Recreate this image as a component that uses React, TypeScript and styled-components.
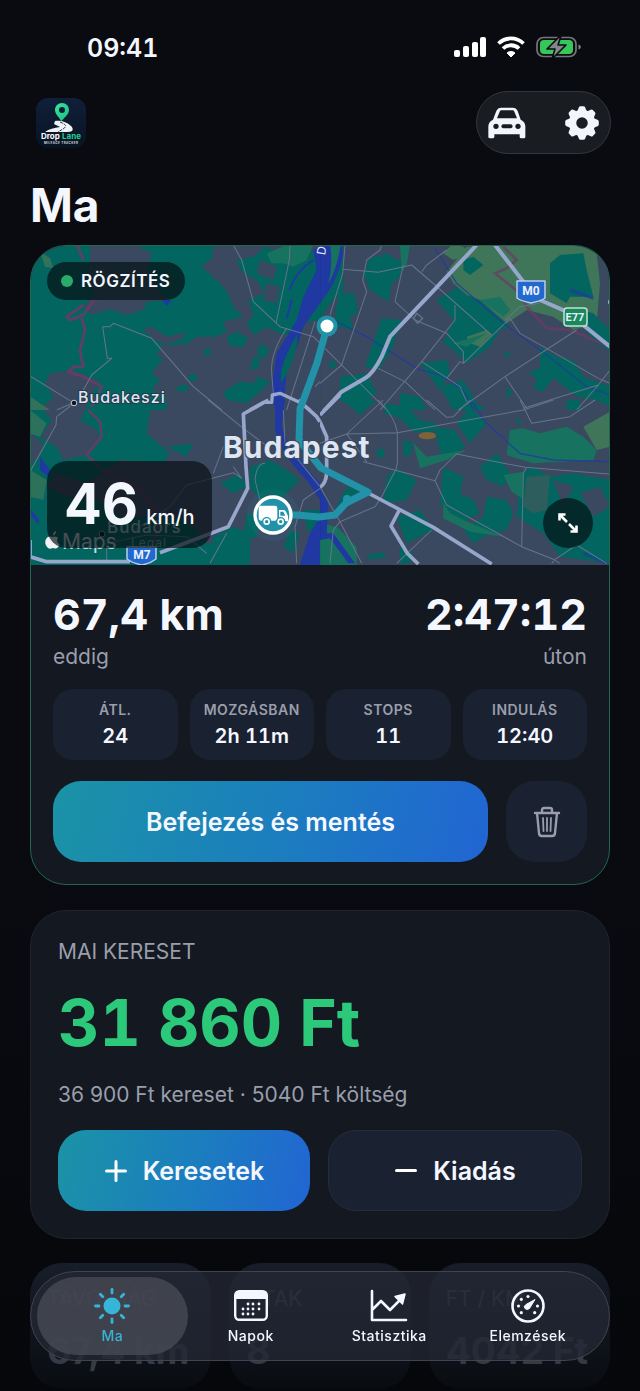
import React from "react";
import styled, { createGlobalStyle, css } from "styled-components";

const color = {
  page: "#090b10",
  card: "#131821",
  tile: "#1a2130",
  text: "#f5f7ff",
  muted: "#9a9eab",
  green: "#2cc97b",
  cyan: "#37b5d8",
  route: "#2192a8",
};

const land = { park: "#03655f", town: "#3b4960", field: "#3f7659", meadow: "#17735f", water: "#2038a2", motorway: "#98a6cc", road: "#66748b", border: "#6f3a66" };

const GlobalStyle = createGlobalStyle`
  *, *::before, *::after { box-sizing: border-box; }
  body {
    margin: 0;
    background: ${color.page};
    color: ${color.text};
    font-family: Inter, "Liberation Sans", sans-serif;
    -webkit-font-smoothing: antialiased;
  }
  button { font: inherit; color: inherit; border: 0; background: none; padding: 0; cursor: pointer; }
  h1, h2, p, dl, dt, dd { margin: 0; }
`;

const Screen = styled.div`
  min-height: 100vh;
  display: flex;
  flex-direction: column;
  background: linear-gradient(180deg, ${color.page} 0%, ${color.page} 60%, #05070b 100%);
`;

const StatusBar = styled.div`
  display: flex;
  justify-content: space-between;
  align-items: center;
  height: 91px;
  padding: 4px 59px 0 87px;
`;

const Clock = styled.time`
  font-size: 25px;
  line-height: 32px;
  font-weight: 600;
  font-variant-numeric: tabular-nums;
`;

const Header = styled.header`
  display: flex;
  justify-content: space-between;
  align-items: center;
  padding: 0 29px 0 36px;
`;

const Toolbar = styled.div`
  display: flex;
  justify-content: space-between;
  align-items: center;
  width: 135px;
  height: 63px;
  padding: 0 10px;
  border: 1px solid #33373d;
  border-radius: 32px;
  background: #191d22;
`;

const IconButton = styled.button`
  display: grid;
  place-items: center;
  height: 44px;
`;

const Main = styled.main`
  display: flex;
  flex-direction: column;
  padding: 0 30px 2px;
`;

const Title = styled.h1`
  margin: 22px 0 11px;
  font-size: 46px;
  line-height: 58px;
  font-weight: 700;
`;

const Card = styled.section<{ $active?: boolean }>`
  display: flex;
  flex-direction: column;
  overflow: hidden;
  border: 1px solid ${(p) => (p.$active ? "#23664f" : "#1f242d")};
  border-radius: 36px;
  background: ${color.card};
`;

const MapFrame = styled.div`
  position: relative;
  height: 319px;
  background: ${land.town};
`;

const MapDrawing = styled.svg`
  display: block;
  width: 100%;
  height: 100%;
`;

const RecordingBadge = styled.div`
  position: absolute;
  top: 16px;
  left: 16px;
  display: flex;
  align-items: center;
  gap: 8px;
  height: 38px;
  padding: 0 15px 0 14px;
  border-radius: 19px;
  background: rgba(7, 20, 25, 0.74);
  font-size: 17px;
  font-weight: 600;
  letter-spacing: 0.5px;
`;

const Dot = styled.span`
  width: 12px;
  height: 12px;
  border-radius: 50%;
  background: #29ac69;
`;

const SpeedBox = styled.div`
  position: absolute;
  left: 16px;
  bottom: 17px;
  display: flex;
  align-items: baseline;
  gap: 8px;
  height: 87px;
  padding: 8px 17px;
  border-radius: 20px;
  background: rgba(6, 14, 18, 0.68);
`;

const SpeedValue = styled.span`
  font-size: 56px;
  line-height: 70px;
  font-weight: 700;
`;

const SpeedUnit = styled.span`
  font-size: 20px;
  font-weight: 500;
`;

const ExpandButton = styled.button`
  position: absolute;
  right: 16px;
  bottom: 17px;
  display: grid;
  place-items: center;
  width: 50px;
  height: 50px;
  border-radius: 50%;
  background: rgba(5, 28, 30, 0.82);
`;

const TripBody = styled.div`
  display: flex;
  flex-direction: column;
  padding: 22px;
`;

const Totals = styled.div`
  display: flex;
  justify-content: space-between;
`;

const Total = styled.div<{ $end?: boolean }>`
  text-align: ${(p) => (p.$end ? "right" : "left")};
`;

const TotalValue = styled.p`
  font-size: 43px;
  line-height: 54px;
  font-weight: 700;
  font-variant-numeric: tabular-nums;
`;

const Caption = styled.p`
  margin-top: 2px;
  color: ${color.muted};
  font-size: 21px;
  line-height: 28px;
`;

const Tiles = styled.dl`
  display: grid;
  grid-template-columns: repeat(4, 1fr);
  gap: 12px;
  margin-top: 18px;
`;

const Tile = styled.div`
  display: flex;
  flex-direction: column;
  align-items: center;
  height: 71px;
  padding-top: 12px;
  border-radius: 20px;
  background: ${color.tile};
`;

const TileLabel = styled.dt`
  color: ${color.muted};
  font-size: 14px;
  line-height: 18px;
  font-weight: 600;
  letter-spacing: 0.5px;
`;

const TileValue = styled.dd`
  font-size: 20px;
  line-height: 34px;
  font-weight: 600;
  font-variant-numeric: tabular-nums;
`;

const Actions = styled.div`
  display: flex;
  gap: 18px;
  margin-top: 21px;
`;

const ActionButton = styled.button<{ $kind: "primary" | "plain" | "icon" }>`
  display: flex;
  align-items: center;
  justify-content: center;
  gap: 15px;
  height: 81px;
  border-radius: 28px;
  font-size: 25px;
  font-weight: 600;
  ${(p) => (p.$kind === "icon" ? css`flex: 0 0 81px;` : css`flex: 1 1 0;`)}
  ${(p) =>
    p.$kind === "primary"
      ? css`background: linear-gradient(105deg, #1b93a6 0%, #1b7fbd 50%, #2165d3 100%);`
      : css`background: ${color.tile};`}
  ${(p) => p.$kind === "plain" && css`border: 1px solid #262d3a;`}
`;

const EarningsCard = styled(Card)`
  margin-top: 25px;
  padding: 25px 27px 27px;
`;

const CardHeading = styled.h2`
  color: ${color.muted};
  font-size: 21px;
  line-height: 32px;
  font-weight: 400;
`;

const Amount = styled.p`
  margin: 15px 0 16px;
  color: ${color.green};
  font-size: 64px;
  line-height: 80px;
  font-weight: 700;
  font-variant-numeric: tabular-nums;
`;

const SummaryRow = styled.div`
  display: grid;
  grid-template-columns: repeat(3, 1fr);
  gap: 18px;
  margin-top: 24px;
`;

const SummaryCard = styled.div`
  height: 126px;
  padding: 22px 17px 0;
  border-radius: 32px;
  background: linear-gradient(180deg, #171e2a 0%, #0d1117 75%, #090b10 100%);
  color: #434751;
  white-space: nowrap;
  overflow: hidden;
`;

const SummaryLabel = styled.p`
  font-size: 21px;
  line-height: 28px;
`;

const SummaryValue = styled.p`
  margin-top: 16px;
  color: #363a43;
  font-size: 37px;
  line-height: 44px;
  font-weight: 700;
`;

const TabBar = styled.nav`
  position: fixed;
  left: 30px;
  right: 30px;
  bottom: 30px;
  display: grid;
  grid-template-columns: repeat(4, 1fr);
  height: 90px;
  padding: 5px 12px;
  border: 1px solid #41444f;
  border-radius: 45px;
  background: rgba(36, 40, 52, 0.78);
`;

const Tab = styled.button<{ $active?: boolean }>`
  display: flex;
  flex-direction: column;
  align-items: center;
  gap: 2px;
  padding-top: 10px;
  border-radius: 40px;
  font-size: 14px;
  line-height: 18px;
  font-weight: 500;
  letter-spacing: 0.5px;
  color: ${(p) => (p.$active ? color.cyan : color.text)};
  ${(p) =>
    p.$active &&
    css`
      margin: 0 -6px;
      background: rgba(76, 79, 89, 0.72);
    `}
`;

const StatusIcons = () => (
  <svg width="127" height="24" viewBox="0 1 127 24" role="img" aria-label="Jel, Wi-Fi, töltés">
    <g fill="#fff">
      <rect x="0" y="15" width="6" height="7" rx="2" />
      <rect x="9" y="11" width="6" height="11" rx="2" />
      <rect x="18" y="7" width="6" height="15" rx="2" />
      <rect x="26" y="2" width="6" height="20" rx="2" />
      <path d="M57 22l-4-4c2-2 6-2 8 0z" stroke="#fff" strokeLinejoin="round" />
    </g>
    <g fill="none" stroke="#fff" strokeWidth="3.8">
      <path d="M44.500 8.500a18 18 0 0 1 25 0" />
      <path d="M49 13.500a11.500 11.500 0 0 1 16 0" />
    </g>
    <rect x="83" y="2.500" width="39" height="19" rx="6.500" fill="none" stroke="#74777a" strokeWidth="1.700" />
    <path d="M124.500 9.500c3 1 3 4 0 5z" fill="#84878a" />
    <rect x="86" y="5" width="33" height="14" rx="4" fill="#35c759" />
    <path d="M106 1L93 14h8l-3 10 14-14h-8l3-9z" fill="#84878a" stroke={color.page} strokeWidth="1.600" strokeLinejoin="round" />
  </svg>
);

const Logo = () => (
  <svg width="50" height="50" viewBox="0 0 50 50" role="img" aria-label="Drop Lane">
    <defs>
      <linearGradient id="logoBg" x1="0" y1="0" x2="0" y2="1">
        <stop offset="0" stopColor="#10203a" />
        <stop offset="1" stopColor="#081222" />
      </linearGradient>
      <linearGradient id="pin" x1="0" y1="0" x2="1" y2="1">
        <stop offset="0" stopColor="#3be59a" />
        <stop offset="1" stopColor="#12bf87" />
      </linearGradient>
    </defs>
    <rect width="50" height="50" rx="12" fill="url(#logoBg)" />
    <path d="M19 23c6-1 12 1 16 5 3 3 2 6-3 6H9c4-3 9-4 15-5l-6-3z" fill="#eef2f5" />
    <path d="M24 24c5 2 8 4 3 7l-5 3" fill="none" stroke="#26344a" strokeWidth="1" strokeDasharray="3 1" />
    <path fillRule="evenodd" d="M26 5c-4 0-7 3-7 7 0 5 6 8 6 12 2-4 8-7 8-12 0-4-3-7-7-7zm0 4a3 3 0 1 1 0 6 3 3 0 0 1 0-6z" fill="url(#pin)" />
    <text x="5" y="41" fontSize="8" fontWeight="700" fill="#fff">Drop</text>
    <text x="26" y="41" fontSize="8" fontWeight="700" fill="#20cf93">Lane</text>
    <text x="8" y="46" fontSize="3" fontWeight="700" letterSpacing=".4" fill="#cdd5de">MILEAGE TRACKER</text>
  </svg>
);

const CarIcon = () => (
  <svg width="40" height="32" viewBox="0 0 120 96" aria-hidden="true">
    <path
      fillRule="evenodd"
      fill="#f2f5fb"
      d="M28 12Q32 2 43 2h34q11 0 15 10l9 26q14 7 14 20v32q0 4-4 4h-8q-5 0-5-4v-8H22v8q0 4-5 4H9q-5 0-5-4V58q0-13 14-20zM38 14q1-4 6-4h32q5 0 6 4l8 20H30zM27 50a8 8 0 1 0 0 16 8 8 0 0 0 0-16zM93 50a8 8 0 1 0 0 16 8 8 0 0 0 0-16zM48 52h24q5 1 5 6t-5 6H48q-5-1-5-6t5-6z"
    />
  </svg>
);

const GearIcon = () => (
  <svg width="36" height="36" viewBox="-18 -18 36 36" aria-hidden="true">
    <circle r="9.500" fill="none" stroke="#f2f5fb" strokeWidth="7.500" />
    {[0, 45, 90, 135, 180, 225, 270, 315].map((a) => (
      <path key={a} transform={`rotate(${a})`} d="M-5-11L-3.200-15.500Q-2.800-16.800-1.500-16.800H1.500Q2.800-16.800 3.200-15.500L5-11z" fill="#f2f5fb" />
    ))}
  </svg>
);

const TrashIcon = () => (
  <svg width="28" height="32" viewBox="0 0 28 32" fill="none" stroke={color.muted} strokeWidth="2.400" strokeLinecap="round" strokeLinejoin="round" aria-hidden="true">
    <path d="M2 7h24M9 7V4q0-2 2-2h6q2 0 2 2v3M4 7l2 20q0 3 3 3h10q3 0 3-3L24 7" />
    <path d="M10 12l.5 13M14 12v13M18 12l-.5 13" strokeWidth="1.800" />
  </svg>
);

const ExpandIcon = () => (
  <svg width="22" height="22" viewBox="0 0 22 22" fill="none" stroke="#fff" strokeWidth="2.600" aria-hidden="true">
    <path d="M8.500 2.500h-6v6M2.500 2.500L10 10M13.500 19.500h6v-6M19.500 19.500L12 12" />
  </svg>
);

const PlusIcon = ({ minus }: { minus?: boolean }) => (
  <svg width="24" height="24" viewBox="0 0 24 24" stroke="#fff" strokeWidth="3" strokeLinecap="round" aria-hidden="true">
    <path d={minus ? "M2.500 11.500h19" : "M2.500 12h19M12 2.500v19"} />
  </svg>
);

const SunIcon = () => (
  <svg width="38" height="38" viewBox="-19 -19 38 38" stroke={color.cyan} strokeWidth="2.800" strokeLinecap="round" aria-hidden="true">
    <circle r="8.500" fill={color.cyan} stroke="none" />
    {[0, 45, 90, 135, 180, 225, 270, 315].map((a) => (
      <path key={a} transform={`rotate(${a})`} d="M0-16.500V-13" />
    ))}
  </svg>
);

const calendarDots = [[15, 14], [20, 14], [26, 14], [10, 19], [15, 19], [20, 19], [26, 19], [10, 24], [15, 24], [20, 24]];

const CalendarIcon = () => (
  <svg width="38" height="38" viewBox="-1 -3 38 38" aria-hidden="true">
    <rect x="2.200" y="1.200" width="31.600" height="28.600" rx="4" fill="none" stroke={color.text} strokeWidth="2.400" />
    <path d="M2 9V5q0-4 4-4h24q4 0 4 4v4z" fill={color.text} />
    {calendarDots.map(([x, y]) => (
      <circle key={`${x}-${y}`} cx={x} cy={y} r="1.400" fill={color.text} />
    ))}
  </svg>
);

const ChartIcon = () => (
  <svg width="38" height="38" viewBox="0 -3 38 38" fill="none" stroke={color.text} strokeWidth="2.600" strokeLinecap="round" strokeLinejoin="round" aria-hidden="true">
    <path d="M2 1v29h34M2 20l9-9 9 9 10-10" />
    <path d="M25 6.500l10-2.500-2.500 10z" fill={color.text} strokeWidth="1.500" />
  </svg>
);

const gaugeDots = [[-9.500, 0], [-6.700, -6.700], [0, -9.500], [9.500, 0], [-6.700, 6.700], [6.700, 6.700]];

const GaugeIcon = () => (
  <svg width="38" height="38" viewBox="-19 -19 38 38" aria-hidden="true">
    <circle r="15.500" fill="none" stroke={color.text} strokeWidth="2.600" />
    {gaugeDots.map(([x, y]) => (
      <circle key={`${x}${y}`} cx={x} cy={y} r="1.600" fill={color.text} />
    ))}
    <path d="M7-6.500L1.500 2.500Q-1 4.500-3 2.500T-2-1.500z" fill={color.text} stroke={color.text} strokeLinejoin="round" />
  </svg>
);

/* The map is drawn as four tiles at three units per pixel. */
const NorthWest = () => (
  <g transform="translate(-10 -5) scale(.33334)">
    <path fill={land.park} d="M0 0H900V510H0z" />
    <path fill={land.town} d="M210 0H320L395 40 385 80 400 130 440 180 380 185 370 210 320 225 270 208 215 225 190 200 225 165 200 120 210 60z" />
    <path fill={land.town} d="M575 25L650 0H900V510H440L440 470 395 450 420 420 395 400 430 355 410 345 430 310 400 300 370 265 395 260 440 290 495 278 490 295 430 318 500 312 530 290 590 290 620 275 610 245 670 230 640 200 625 160 600 130 545 80 580 50z" />
    <path fill={land.park} d="M650 60L700 50 735 20 800 45 870 30 900 60V240L840 250 830 275 790 285 740 262 700 285 680 250 700 225 685 180 735 160 710 120 665 95zM620 290L650 275 685 295 670 320 630 318zM700 350l20 5-5 30-25 5zM550 330l20-5 5 18-20 5z" />
    <path fill={land.town} d="M720 60l50 20-10 40-50-20zM740 130l40 10-10 50-40-10z" />
    <path fill={land.park} d="M505 405l20-5 10 20-25 5zM470 440l30-8 5 20-30 5zM610 455l50-30 40 5 15-20 35 15-30 30-40 35-60-10zM720 310l30 20-20 30-20-20z" />
    <path fill={land.meadow} d="M755 70L740 40 800 15H880L860 60 820 80 790 70z" />
    <path fill={land.town} d="M90 400L160 390 200 410 240 425 215 460 195 510H60L100 470 75 430z" />
    <path fill={land.field} d="M60 35l30 20 10 30-25-5zM30 470l60 40H30z" opacity=".8" />
    <path fill={land.water} d="M880 30L900 20V190L850 260 835 310 800 400 790 510H765L755 440 770 340 830 240 850 170 890 90zM425 180h30l-15 18z" />
    <path fill={land.park} d="M880 75Q820 120 815 190L820 235Q860 160 880 75zM830 285Q840 330 785 430 770 390 830 285z" />
    <g fill="none" stroke={land.border} strokeWidth="9" strokeLinejoin="round" opacity=".8">
      <path d="M165 0L190 60M225 175L190 225 150 240 140 230 190 195M185 235L195 270 180 330 190 380 160 380 145 395 190 410 245 440 215 500" />
    </g>
    <g fill="none" stroke={land.road} strokeWidth="3" strokeLinejoin="round">
      <path d="M30 408L160 488 110 510M190 450L215 405 275 355H262L248 260H270L280 250 395 295 520 440 605 510M640 15L665 60 700 185 780 260 880 290 900 310M810 15L808 60 768 250M800 265Q750 340 755 400L760 460M885 245L800 510M885 440L900 425" />
    </g>
    <path d="M815 180L800 235M808 150Q830 90 880 60" fill="none" stroke={land.water} strokeWidth="6" />
    <path d="M690 510L730 487H755L757 465 780 460 835 485 870 510" fill="none" stroke={land.motorway} strokeWidth="10" strokeLinejoin="round" />
  </g>
);

const NorthEast = () => (
  <g transform="translate(290 -5) scale(.33334)">
    <path fill={land.town} d="M0 0H900V510H0z" />
    <path fill={land.park} d="M150 55L200 40 250 70 240 110 215 130 205 185 150 150 130 100zM60 165l40-10 15 60-25 15 10 40-50-10-5-50zM185 235l60 5-30 90-40 60-40-10 20-60zM60 410l80-10 30 60-60 50-50-30zM0 0H70V160L30 190 0 240zM35 360l15 10-5 15-22-5z" />
    <path fill={land.park} d="M350 180L400 150 430 130 480 180 570 260 540 270 510 320 440 370 400 330 370 310 400 240zM300 370l80-10 10 40-30 50-30-40zM360 440l70-20 40 70 30 20H400zM240 460l60 10 20 40H240zM560 440l20 20-20 15zM625 400l60-30 25 30-40 55-30-10 10-30zM660 320l50 30 50 10 30 50 80 30v60l-40-20-60-10-110-90zM740 480h40v30h-40zM550 340l20-5-5 20z" />
    <path fill={land.field} d="M440 20L750 0 830 40 840 130 830 250 760 270 700 230 620 210 560 250 480 180 440 165 400 130 380 95zM440 290L500 270 515 285 480 320 450 310z" />
    <path fill={land.field} d="M370 40L395 15 430 20 450 40 400 60z" />
    <path fill={land.park} d="M430 60l30-10 30 25-40 30-20-15zM690 70L720 45 790 40 800 90 820 170 750 170 740 190 690 160zM780 210l40 10 50 50v60l-40-20-50-60z" />
    <path fill={land.meadow} d="M240 15h30l-10 60-15 20zM400 310l100-30-60 40zM480 180l60-10 30 40-20 20z" />
    <path d="M0 190Q50 130 68 50V0H0z" fill={land.water} />
    <path d="M30 15h32Q50 90 25 130 40 70 30 15z" fill={land.meadow} />
    <path d="M750 150l70 25" stroke={land.water} strokeWidth="9" opacity=".7" />
    <g fill="none" stroke={land.water} strokeWidth="4" opacity=".75">
      <path d="M345 25Q380 80 410 130L550 250 680 345 800 440 870 465M40 240L140 290 290 385 360 405 430 450 460 510" />
    </g>
    <path d="M550 20L590 60 560 85 525 100 600 160 620 200 680 265 750 270 870 320" fill="none" stroke={land.border} strokeWidth="8" opacity=".7" />
    <g fill="none" stroke={land.road} strokeWidth="3" strokeLinejoin="round">
      <path d="M75 15L68 100 30 225M185 15L180 30 140 60 128 120 140 155 65 375 0 430M68 88L175 97 275 75 345 135 515 285M250 75L225 185 285 240 380 280 430 335 430 370 420 365 380 415M380 30L320 75 305 95M405 195V240L305 365 180 510M305 365L420 440 440 485M15 325L65 375 200 510M175 385L255 425 345 510M430 370L570 235 600 280 680 325 835 415 870 430M415 510L555 410 770 270M555 410L620 505M610 505L835 435 870 390M835 435L770 510M555 240L600 200 660 190" />
    </g>
    <path d="M290 220l18 15-15 15-12-15z" fill="none" stroke={land.road} strokeWidth="4" />
    <g fill="none" stroke={land.motorway} strokeWidth="12" strokeLinejoin="round">
      <path d="M470 15L210 290 185 350Q160 400 135 415L65 455 0 525M525 15L610 125 660 180 740 215 870 320" />
    </g>
    <circle cx="875" cy="186" r="9" fill="#101519" stroke="#c6ccd9" strokeWidth="3" />
  </g>
);

const SouthWest = () => (
  <g transform="translate(-10 155) scale(.33334)">
    <path fill={land.park} d="M0 30H900V510H0z" />
    <path fill={land.town} d="M70 30H195L180 60 230 90 240 120 200 165 130 180 110 140 60 110 95 60zM30 100l40 30-10 40-30 20zM390 30H900V510H660L640 450 560 430 540 400 480 350H300L230 300 140 290 80 260 110 220 200 250 300 180 430 190 450 160 380 100z" />
    <path fill={land.park} d="M600 250l60-30 20 40-40 20zM690 200l60-20 50 30 40 30-60 60-30-20-30 20-30-40zM580 410l60-30 50 20v110H560zM440 140l80-10-20 40zM680 340l40 10-10 60-40 20zM810 390l30 10-20 60-30-20zM850 330h50v70l-40-10zM60 330l40 10 40 80-20 60-90-20V340z" />
    <path fill={land.field} d="M30 30l50 40-20 40-30-10zM30 210l50 30-10 60-40-10z" opacity=".7" />
    <path fill={land.water} d="M765 0H795L785 80Q800 140 900 250V300L860 240Q780 160 765 90zM895 360L870 400 835 510H900V360zM60 170l30 40-5 20-25-20zM30 325l28 35-5 12-23-30z" />
    <path d="M205 30L240 65 245 110 200 165 250 210 350 260 420 340 400 440" fill="none" stroke={land.border} strokeWidth="8" opacity=".8" />
    <g fill="none" stroke={land.road} strokeWidth="3" strokeLinejoin="round">
      <path d="M155 15L110 50 108 75 30 215M565 0L670 85 750 145M345 390L450 320 500 255 640 218 665 235 640 200M610 140L580 220M735 190Q710 190 705 240L720 300M790 30L795 130 900 260M830 490L825 380 850 300 900 265M620 400L570 490M260 490V430L380 405 500 410 560 460" />
    </g>
    <g fill="none" stroke={land.motorway} strokeWidth="11" strokeLinejoin="round">
      <path d="M745 0L670 42 678 200 683 265 625 380 420 458M30 470L80 485H330M30 435V470M835 0L890 50 900 65" />
    </g>
  </g>
);

const SouthEast = () => (
  <g transform="translate(290 155) scale(.33334)">
    <path fill={land.town} d="M0 30H900V510H0z" />
    <path fill={land.park} d="M70 0H170L120 45zM200 10l60 10 40 40 50 10-10 30-60-5-40-40-50-15zM345 80l60 10 30 50-60 40-20-40zM200 230L230 205 290 240 260 300 190 310zM230 350L300 330 340 390 260 430zM370 200l60 30-10 50 40 20 20 40-60 30-60-60zM450 20l50 50-50 60-40-60zM480 200l50-40 40 60-20 40-50-20zM500 290l60 10 20 40-20 50-50 10-50 30-30-40 60-40zM590 350L670 400 720 470 870 490V240L760 220 690 230 640 200 600 220z" />
    <path fill={land.park} d="M240 440l40 20-10 30h-30zM140 465l50-8 10 16-50 5zM80 260l40 10-80 70zM170 150l20-5 5 25-20 5zM250 120l30 10-10 40-20-5zM590 50l15 15-12 12z" />
    <path fill={land.town} d="M700 240l60 20-30 60zM780 280l60-20 30 60-50 30z" />
    <path fill={land.meadow} d="M570 90L610 85 660 100 740 80 790 110 830 150 820 180 640 190 560 165zM550 225l60-10-5 80-30-20zM0 370l50 10 60 60v60H0zM280 130l40 40 120-20-60 30-80 25zM370 310l20 30 40 20 120 50-100-15-80-40z" />
    <path fill={land.field} d="M790 80L870 35V140L830 150z" />
    <path fill="#2d5d5c" d="M620 230L690 225 680 330 640 340 610 320z" />
    <ellipse cx="322" cy="107" rx="26" ry="11" fill="#7d6338" />
    <path fill={land.water} d="M0 270Q20 290 25 320L20 400 40 400 105 490H85L30 415 0 420z" />
    <g fill="none" stroke={land.water} strokeWidth="4" opacity=".8">
      <path d="M455 5L500 70 600 160 700 180 870 185" />
    </g>
    <path d="M790 460L860 490" stroke={land.water} strokeWidth="8" opacity=".6" />
    <g fill="none" stroke={land.road} strokeWidth="3" strokeLinejoin="round">
      <path d="M0 130L80 102 232 98 610 30 700 0M80 102L190 0M175 0Q225 50 232 98V190L228 208 185 290 165 320 60 365 40 390 30 490M130 185L345 242 360 210 410 162 615 202 870 222M345 242L380 315 605 440 700 478 720 490M620 202L610 220 605 440M320 0L380 52 400 50 450 0M600 0L635 70 750 50 825 0M80 102L140 185M0 260L60 365 125 490M335 390L230 490M705 478L770 435 860 490M705 478L695 490" />
    </g>
    <g fill="none" stroke={land.motorway} strokeWidth="11" strokeLinejoin="round">
      <path d="M150 282L340 382 515 492M238 330L213 378 262 460 295 492M0 45L60 -15M0 65L20 110V220Q18 250 0 262" />
    </g>
  </g>
);

const CityMap = () => (
  <MapDrawing viewBox="1 1 578 319" preserveAspectRatio="xMidYMid slice" role="img" aria-label="Budapest térképe">
    <NorthEast />
    <NorthWest />
    <SouthEast />
    <SouthWest />
    <path d="M297 82L287 118 273 156 270 164 269 195 291 223 338 247 316 258 305 270 289 272 267 270 243 270" fill="none" stroke={color.route} strokeWidth="7" strokeLinejoin="round" />
    <circle cx="317" cy="254" r="4" fill={color.route} />
    <circle cx="297" cy="81" r="10.500" fill={color.route} />
    <circle cx="297" cy="81" r="6.500" fill="#fff" />
    <circle cx="243" cy="270" r="26" fill={color.route} opacity=".12" />
    <circle cx="243" cy="270" r="18" fill={color.route} stroke="#fff" strokeWidth="3.400" />
    <g transform="translate(-10 155) scale(.33334)" fill="#fff">
      <rect x="716" y="317" width="56" height="45" rx="7" />
      <path d="M777 330h14q5 0 7 5l6 13v16h-27z" />
      <path d="M781 335h9l6 12h-15z" fill={color.route} />
      <circle cx="740" cy="365" r="12" stroke={color.route} strokeWidth="4" />
      <circle cx="782" cy="365" r="12" stroke={color.route} strokeWidth="4" />
      <circle cx="740" cy="365" r="5" fill={color.route} />
      <circle cx="782" cy="365" r="5" fill={color.route} />
    </g>
    <g fill="#dfe6f3" fontFamily="Inter, sans-serif">
      <text x="193" y="213" fontSize="30" fontWeight="700" letterSpacing="1" stroke="#38465c" strokeWidth="2" paintOrder="stroke">Budapest</text>
      <circle cx="44" cy="158" r="2.800" fill="#10151d" stroke="#c6ccd9" />
      <text x="48" y="158" fontSize="16" fontWeight="500" letterSpacing="1" stroke="#26384c" strokeWidth="2" paintOrder="stroke">Budakeszi</text>
      <circle cx="72" cy="289" r="3" fill="#10151d" stroke="#8a93a5" />
      <text x="77" y="288" fontSize="17" fontWeight="500" letterSpacing="1" opacity=".75">Budaörs</text>
      <text x="101" y="302" fontSize="12" opacity=".5" letterSpacing="1">Legal</text>
      <text x="32" y="304" fontSize="21" opacity=".9">Maps</text>
      <text x="287" y="7" fontSize="12" transform="rotate(-80 293 4)">D</text>
    </g>
    <path d="M26 286q0 3-3 4.500 0-3.500 3-4.500zM28 293q-2-2.500-5-1-5-1.500-7 2-2 4 1 8 2 2.500 4 1.500t4 0q2 .5 3.500-2l1-2q-4-3-1.500-6.500z" fill="#f2f2f4" />
    <path d="M487 36h28v17q-4 3-14 5-10-2-14-5z" fill="#2368cf" stroke="#b9cdf0" strokeWidth="1.500" strokeLinejoin="round" />
    <rect x="534" y="63" width="23" height="18" rx="3" fill="#18885d" stroke="#bfe3d3" strokeWidth="1.500" />
    <path d="M97 302h29v12q-5 4-14 6-10-2-15-6z" fill="#2368cf" stroke="#b9cdf0" strokeWidth="1.500" strokeLinejoin="round" />
    <g fontFamily="Roboto, sans-serif" fontSize="12" fontWeight="700" fill="#eaf1ff" textAnchor="middle">
      <text x="501" y="50">M0</text>
      <text x="545" y="76" fontSize="11">E77</text>
      <text x="112" y="314">M7</text>
    </g>
    <path d="M0 295v16h2v-16z" fill="#7fa6e6" />
  </MapDrawing>
);

const tripStats = [
  ["ÁTL.", "24"],
  ["MOZGÁSBAN", "2h 11m"],
  ["STOPS", "11"],
  ["INDULÁS", "12:40"],
];

const summaries = [
  ["TÁVOLSÁG", "67,4 km"],
  ["UTAK", "8"],
  ["FT / KM", "4042 Ft"],
];

const tabs = [
  { label: "Ma", Icon: SunIcon },
  { label: "Napok", Icon: CalendarIcon },
  { label: "Statisztika", Icon: ChartIcon },
  { label: "Elemzések", Icon: GaugeIcon },
];

export default function App() {
  return (
    <Screen>
      <GlobalStyle />
      <StatusBar>
        <Clock>09:41</Clock>
        <StatusIcons />
      </StatusBar>
      <Header>
        <Logo />
        <Toolbar>
          <IconButton aria-label="Jármű"><CarIcon /></IconButton>
          <IconButton aria-label="Beállítások"><GearIcon /></IconButton>
        </Toolbar>
      </Header>
      <Main>
        <Title>Ma</Title>
        <Card $active>
          <MapFrame>
            <CityMap />
            <RecordingBadge><Dot />RÖGZÍTÉS</RecordingBadge>
            <SpeedBox>
              <SpeedValue>46</SpeedValue>
              <SpeedUnit>km/h</SpeedUnit>
            </SpeedBox>
            <ExpandButton aria-label="Térkép nagyítása"><ExpandIcon /></ExpandButton>
          </MapFrame>
          <TripBody>
            <Totals>
              <Total>
                <TotalValue>67,4 km</TotalValue>
                <Caption>eddig</Caption>
              </Total>
              <Total $end>
                <TotalValue>2:47:12</TotalValue>
                <Caption>úton</Caption>
              </Total>
            </Totals>
            <Tiles>
              {tripStats.map(([label, value]) => (
                <Tile key={label}>
                  <TileLabel>{label}</TileLabel>
                  <TileValue>{value}</TileValue>
                </Tile>
              ))}
            </Tiles>
            <Actions>
              <ActionButton $kind="primary">Befejezés és mentés</ActionButton>
              <ActionButton $kind="icon" aria-label="Törlés"><TrashIcon /></ActionButton>
            </Actions>
          </TripBody>
        </Card>
        <EarningsCard>
          <CardHeading>MAI KERESET</CardHeading>
          <Amount>31 860 Ft</Amount>
          <Caption>36 900 Ft kereset · 5040 Ft költség</Caption>
          <Actions>
            <ActionButton $kind="primary"><PlusIcon />Keresetek</ActionButton>
            <ActionButton $kind="plain"><PlusIcon minus />Kiadás</ActionButton>
          </Actions>
        </EarningsCard>
        <SummaryRow>
          {summaries.map(([label, value]) => (
            <SummaryCard key={label}>
              <SummaryLabel>{label}</SummaryLabel>
              <SummaryValue>{value}</SummaryValue>
            </SummaryCard>
          ))}
        </SummaryRow>
      </Main>
      <TabBar>
        {tabs.map(({ label, Icon }, i) => (
          <Tab key={label} $active={i === 0}>
            <Icon />
            {label}
          </Tab>
        ))}
      </TabBar>
    </Screen>
  );
}
